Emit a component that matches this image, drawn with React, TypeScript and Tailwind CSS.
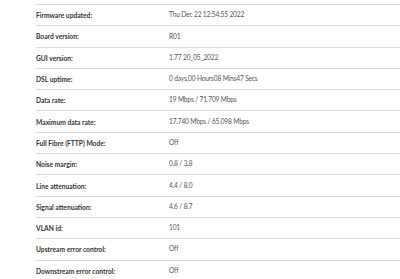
const rows = [
  ["Firmware updated:", "Thu Dec 22 12:54:55 2022"],
  ["Board version:", "R01"],
  ["GUI version:", "1.77 20_05_2022"],
  ["DSL uptime:", "0 days,00 Hours08 Mins47 Secs"],
  ["Data rate:", "19 Mbps / 71.709 Mbps"],
  ["Maximum data rate:", "17.740 Mbps / 65.098 Mbps"],
  ["Full Fibre (FTTP) Mode:", "Off"],
  ["Noise margin:", "0.8 / 3.8"],
  ["Line attenuation:", "4.4 / 8.0"],
  ["Signal attenuation:", "4.6 / 8.7"],
  ["VLAN id:", "101"],
  ["Upstream error control:", "Off"],
  ["Downstream error control:", "Off"],
];

export default function App() {
  return (
    <div className="w-[400px] h-[279px] overflow-hidden bg-white pl-[36px] pt-[4px] font-['Lato',sans-serif]">
      <div className="border-t-[1.5px] border-[#dcdcdc]">
        {rows.map(([label, value], i) => (
          <div
            key={i}
            className="flex items-center h-[21.3px] border-b-[1.5px] border-[#dcdcdc]"
          >
            <div className="w-[133px] text-[6.7px] font-bold text-[#333333]">{label}</div>
            <div className="text-[6.6px] tracking-[-0.15px] text-[#555555]">{value}</div>
          </div>
        ))}
      </div>
    </div>
  );
}
